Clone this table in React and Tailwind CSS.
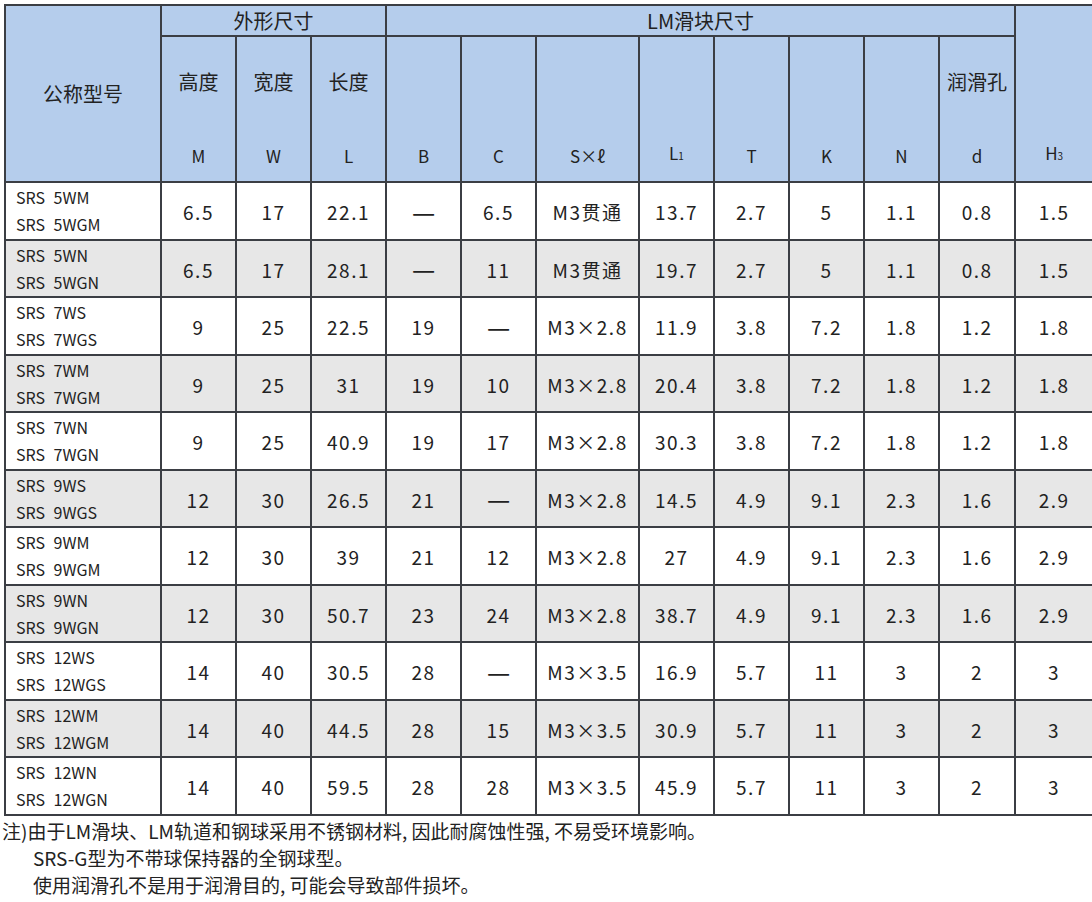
import React from 'react';

const font = { fontFamily: '"Noto Sans CJK SC", "Noto Sans", sans-serif' };

const rows = [
  ['SRS 5WM', 'SRS 5WGM', '6.5', '17', '22.1', '—', '6.5', 'M3贯通', '13.7', '2.7', '5', '1.1', '0.8', '1.5'],
  ['SRS 5WN', 'SRS 5WGN', '6.5', '17', '28.1', '—', '11', 'M3贯通', '19.7', '2.7', '5', '1.1', '0.8', '1.5'],
  ['SRS 7WS', 'SRS 7WGS', '9', '25', '22.5', '19', '—', 'M3×2.8', '11.9', '3.8', '7.2', '1.8', '1.2', '1.8'],
  ['SRS 7WM', 'SRS 7WGM', '9', '25', '31', '19', '10', 'M3×2.8', '20.4', '3.8', '7.2', '1.8', '1.2', '1.8'],
  ['SRS 7WN', 'SRS 7WGN', '9', '25', '40.9', '19', '17', 'M3×2.8', '30.3', '3.8', '7.2', '1.8', '1.2', '1.8'],
  ['SRS 9WS', 'SRS 9WGS', '12', '30', '26.5', '21', '—', 'M3×2.8', '14.5', '4.9', '9.1', '2.3', '1.6', '2.9'],
  ['SRS 9WM', 'SRS 9WGM', '12', '30', '39', '21', '12', 'M3×2.8', '27', '4.9', '9.1', '2.3', '1.6', '2.9'],
  ['SRS 9WN', 'SRS 9WGN', '12', '30', '50.7', '23', '24', 'M3×2.8', '38.7', '4.9', '9.1', '2.3', '1.6', '2.9'],
  ['SRS 12WS', 'SRS 12WGS', '14', '40', '30.5', '28', '—', 'M3×3.5', '16.9', '5.7', '11', '3', '2', '3'],
  ['SRS 12WM', 'SRS 12WGM', '14', '40', '44.5', '28', '15', 'M3×3.5', '30.9', '5.7', '11', '3', '2', '3'],
  ['SRS 12WN', 'SRS 12WGN', '14', '40', '59.5', '28', '28', 'M3×3.5', '45.9', '5.7', '11', '3', '2', '3'],
];

const widths = [156, 75, 75, 75, 75, 75, 103, 75, 75, 75, 75, 76, 78];

const cell = 'border-2 border-[#3b3e44] p-0';

function SubHead({ zh, children }) {
  return (
    <div className="flex h-[144px] flex-col items-center">
      <div className="mt-[33px] h-[24px] text-[20px] leading-[24px]">{zh}</div>
      <div className="mt-auto mb-[15px] text-[17px] leading-[20px]">{children}</div>
    </div>
  );
}

export default function App() {
  return (
    <div className="w-[1092px] h-[902px] overflow-hidden bg-white text-[#222]" style={font}>
      <table className="ml-[4px] mt-[4px] table-fixed border-collapse" style={{ width: 1088 }}>
        <colgroup>
          {widths.map((w, i) => (
            <col key={i} style={{ width: w }} />
          ))}
        </colgroup>
        <thead className="bg-[#b5cdec]">
          <tr className="h-[31px]">
            <th rowSpan={2} className={`${cell} text-[20px] font-normal`}>公称型号</th>
            <th colSpan={3} className={`${cell} text-[20px] font-normal leading-[24px]`}>外形尺寸</th>
            <th colSpan={8} className={`${cell} text-[20px] font-normal leading-[24px]`}>LM滑块尺寸</th>
            <th rowSpan={2} className={`${cell} align-bottom font-normal`}>
              <div className="mb-[15px] text-[17px] leading-[20px]">
                H<span className="text-[10px]">3</span>
              </div>
            </th>
          </tr>
          <tr className="h-[146px]">
            <th className={`${cell} font-normal`}><SubHead zh="高度">M</SubHead></th>
            <th className={`${cell} font-normal`}><SubHead zh="宽度">W</SubHead></th>
            <th className={`${cell} font-normal`}><SubHead zh="长度">L</SubHead></th>
            <th className={`${cell} font-normal`}><SubHead>B</SubHead></th>
            <th className={`${cell} font-normal`}><SubHead>C</SubHead></th>
            <th className={`${cell} font-normal`}><SubHead>S×ℓ</SubHead></th>
            <th className={`${cell} font-normal`}>
              <SubHead>
                L<span className="text-[10px]">1</span>
              </SubHead>
            </th>
            <th className={`${cell} font-normal`}><SubHead>T</SubHead></th>
            <th className={`${cell} font-normal`}><SubHead>K</SubHead></th>
            <th className={`${cell} font-normal`}><SubHead>N</SubHead></th>
            <th className={`${cell} font-normal`}><SubHead zh="润滑孔">d</SubHead></th>
          </tr>
        </thead>
        <tbody>
          {rows.map((r, i) => (
            <tr key={i} className={`h-[57.5px] ${i % 2 ? 'bg-[#e7e7e7]' : 'bg-white'}`}>
              <td className={`${cell} pl-[10px] pt-[1px] text-[16px] leading-[27px] whitespace-pre [word-spacing:5px]`}>
                <div>{r[0]}</div>
                <div>{r[1]}</div>
              </td>
              {r.slice(2).map((v, j) => (
                <td key={j} className={`${cell} pt-[3px] text-center text-[19px] leading-[26px] tracking-[1.5px]`}>
                  {v === '—' ? <span className="text-[26px] tracking-normal">—</span> : v}
                </td>
              ))}
            </tr>
          ))}
        </tbody>
      </table>
      <div className="mt-[1px] text-[19px] leading-[27px]">
        <div className="pl-[2px]">注)由于LM滑块、LM轨道和钢球采用不锈钢材料, 因此耐腐蚀性强, 不易受环境影响。</div>
        <div className="pl-[33px]">SRS-G型为不带球保持器的全钢球型。</div>
        <div className="pl-[33px]">使用润滑孔不是用于润滑目的, 可能会导致部件损坏。</div>
      </div>
    </div>
  );
}
